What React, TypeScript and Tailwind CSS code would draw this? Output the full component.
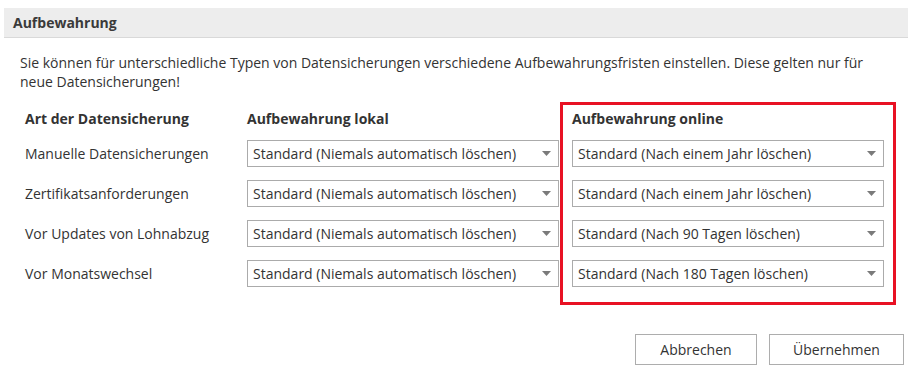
const rows = [
  { label: "Manuelle Datensicherungen", online: "Standard (Nach einem Jahr löschen)" },
  { label: "Zertifikatsanforderungen", online: "Standard (Nach einem Jahr löschen)" },
  { label: "Vor Updates von Lohnabzug", online: "Standard (Nach 90 Tagen löschen)" },
  { label: "Vor Monatswechsel", online: "Standard (Nach 180 Tagen löschen)" },
];

function Select({ value }: { value: string }) {
  return (
    <div className="flex h-[27px] w-[312px] items-center justify-between border border-[#ababab] bg-white pl-[5px] pr-[6px]">
      <span className="whitespace-nowrap">{value}</span>
      <svg width="9" height="5" viewBox="0 0 9 5" className="mr-[1px]">
        <path d="M0 0h9L4.5 5z" fill="#7a7a7a" />
      </svg>
    </div>
  );
}

export default function App() {
  return (
    <div
      className="h-[379px] w-[912px] bg-white pt-[8px] text-[14px] text-[#333]"
      style={{ fontFamily: '"Open Sans", "Noto Sans", sans-serif' }}
    >
      <div className="mx-[4px] flex h-[30px] items-center border-b border-[#d9d9d9] bg-[#ededed] pl-[9px]">
        <h2 className="text-[14px] font-bold text-[#3a3a3a]">Aufbewahrung</h2>
      </div>

      <p className="mt-[15px] whitespace-nowrap pl-[20px] leading-[19px]">
        Sie können für unterschiedliche Typen von Datensicherungen verschiedene Aufbewahrungsfristen einstellen. Diese gelten nur für
        <br />
        neue Datensicherungen!
      </p>

      <div className="mt-[11px] flex pl-[25px]">
        <div className="flex w-[222px] flex-col pt-[3px]">
          <div className="flex h-[26px] items-center font-bold">Art der Datensicherung</div>
          <div className="mt-[9px] flex flex-col gap-[13px]">
            {rows.map((r) => (
              <div key={r.label} className="flex h-[27px] items-center">
                {r.label}
              </div>
            ))}
          </div>
        </div>

        <div className="flex w-[312px] flex-col pt-[3px]">
          <div className="flex h-[26px] items-center font-bold">Aufbewahrung lokal</div>
          <div className="mt-[9px] flex flex-col gap-[13px]">
            {rows.map((r) => (
              <Select key={r.label} value="Standard (Niemals automatisch löschen)" />
            ))}
          </div>
        </div>

        <div className="ml-[1px] border-[3px] border-[#e81123] px-[9px] pb-[15px]">
          <div className="flex h-[26px] items-center font-bold">Aufbewahrung online</div>
          <div className="mt-[9px] flex flex-col gap-[13px]">
            {rows.map((r) => (
              <Select key={r.label} value={r.online} />
            ))}
          </div>
        </div>
      </div>

      <div className="mt-[29px] flex justify-end gap-[12px] pr-[8px]">
        <button className="h-[31px] w-[122px] border border-[#adadad] bg-white">Abbrechen</button>
        <button className="h-[31px] w-[135px] border border-[#adadad] bg-white">Übernehmen</button>
      </div>
    </div>
  );
}
